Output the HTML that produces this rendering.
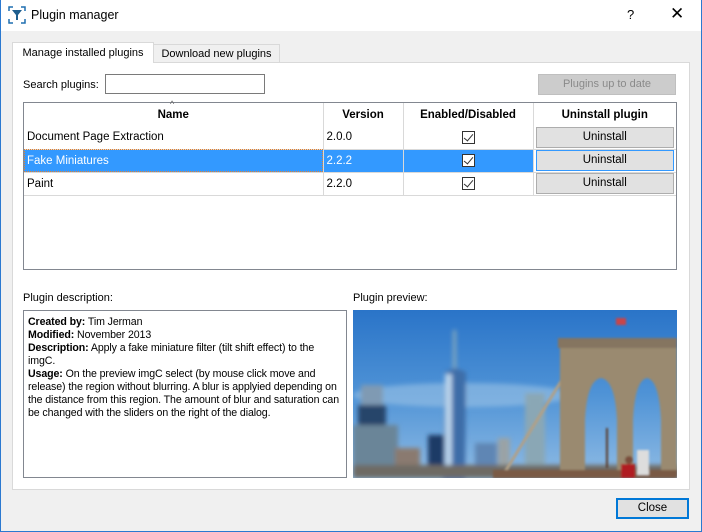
<!DOCTYPE html>
<html><head><meta charset="utf-8"><style>
*{box-sizing:border-box;margin:0;padding:0}
body{width:702px;height:532px;background:#f0f0f0;font-family:"Liberation Sans",sans-serif;font-size:11.5px;color:#000;position:relative;overflow:hidden}
.abs{position:absolute}
.win{position:absolute;left:0;top:0;width:702px;height:532px;border:1px solid #2b79d0;border-top:none}
.title{position:absolute;left:0;top:0;width:702px;height:31px;background:#fff}
.pane{left:12px;top:62px;width:678px;height:428px;background:#fff;border:1px solid #d9d9d9}
.tab{height:20px;border:1px solid #d9d9d9;border-bottom:none;font-size:11px;padding-top:4px;text-align:center;white-space:nowrap}
table{border-collapse:collapse;position:absolute;left:24px;top:103px;table-layout:fixed}
td{height:23px;padding:0 3px;border-right:1px solid #d9d9d9;border-bottom:1px solid #d9d9d9;font-size:11.5px;white-space:nowrap}
th{height:23px;font-weight:bold;border-right:1px solid #d9d9d9;font-size:11.5px}
.cb{display:inline-block;width:13px;height:13px;border:1px solid #333;background:#fff;position:relative;vertical-align:middle}
.cb:after{content:"";position:absolute;left:3px;top:0px;width:4px;height:8px;border-right:1.3px solid #333;border-bottom:1.3px solid #333;transform:rotate(40deg)}
.btn{background:#e1e1e1;border:1px solid #adadad;text-align:center;height:21px;line-height:19px;font-size:11.5px;color:#000}
.sel td{background:#3399ff;color:#fff}
</style></head><body>
<div class="title"></div>
<div class="win"></div>
<svg class="abs" style="left:8px;top:6px" width="18" height="18" viewBox="0 0 18 18"><path d="M1 5V1h4M13 1h4v4M1 13v4h4M13 17h4v-4" stroke="#1e6fb0" stroke-width="1.5" fill="none"/><path d="M4 4h10l-4 5v5h-2v-5z" fill="#1f5f8f"/></svg>
<div class="abs" style="left:31px;top:8px;font-size:12.5px">Plugin manager</div>
<div class="abs" style="left:627px;top:7px;font-size:13px">?</div>
<div class="abs" style="left:670px;top:4px;font-size:17px">✕</div>
<div class="abs pane"></div>
<div class="abs tab" style="left:12px;top:42px;width:142px;height:21px;background:#fff">Manage installed plugins</div>
<div class="abs tab" style="left:153px;top:44px;width:127px;height:18px;background:#f0f0f0;padding-top:3px">Download new plugins</div>
<div class="abs" style="left:23px;top:79px;font-size:11px">Search plugins:</div>
<div class="abs" style="left:105px;top:74px;width:160px;height:20px;border:1px solid #7a7a7a;background:#fff"></div>
<div class="abs" style="left:538px;top:74px;width:138px;height:21px;background:#cccccc;border:1px solid #bfbfbf;color:#8a8a8a;text-align:center;line-height:19px;font-size:11px">Plugins up to date</div>
<div class="abs" style="left:23px;top:102px;width:654px;height:168px;border:1px solid #828790;background:#fff"></div>
<div class="abs" style="left:170px;top:99px;font-size:9px;color:#666">^</div>
<table>
<colgroup><col style="width:299px"><col style="width:80px"><col style="width:130px"><col style="width:143px"></colgroup>
<tr><th>Name</th><th>Version</th><th>Enabled/Disabled</th><th style="border-right:none">Uninstall plugin</th></tr>
<tr><td>Document Page Extraction</td><td>2.0.0</td><td style="text-align:center"><span class="cb"></span></td><td style="padding:0 2px;border-right:none"><div class="btn">Uninstall</div></td></tr>
<tr class="sel"><td style="outline:1px dotted #e08030;outline-offset:-1px">Fake Miniatures</td><td>2.2.2</td><td style="text-align:center"><span class="cb"></span></td><td style="padding:0 2px;border-right:none;background:#fff"><div class="btn" style="border-color:#3399ff">Uninstall</div></td></tr>
<tr><td>Paint</td><td>2.2.0</td><td style="text-align:center"><span class="cb"></span></td><td style="padding:0 2px;border-right:none"><div class="btn">Uninstall</div></td></tr>
</table>
<div class="abs" style="left:23px;top:292px;font-size:11px">Plugin description:</div>
<div class="abs" style="left:353px;top:292px;font-size:11px">Plugin preview:</div>
<div class="abs" style="left:23px;top:310px;width:324px;height:168px;border:1px solid #828790;background:#fff;padding:5px 4px;line-height:13px;font-size:10.6px;letter-spacing:-0.1px">
<b>Created by:</b> Tim Jerman<br><b>Modified:</b> November 2013<br><b>Description:</b> Apply a fake miniature filter (tilt shift effect) to the imgC.<br><b>Usage:</b> On the preview imgC select (by mouse click move and release) the region without blurring. A blur is applyied depending on the distance from this region. The amount of blur and saturation can be changed with the sliders on the right of the dialog.</div>
<svg class="abs" style="left:353px;top:310px" width="324" height="168" viewBox="0 0 324 168">
<defs><linearGradient id="sk" x1="0" y1="0" x2="0" y2="1"><stop offset="0" stop-color="#2a74c8"/><stop offset=".5" stop-color="#4f93d6"/><stop offset="1" stop-color="#8fbbe4"/></linearGradient>
<filter id="b"><feGaussianBlur stdDeviation="2.5"/></filter><filter id="b2"><feGaussianBlur stdDeviation="1"/></filter></defs>
<rect width="324" height="168" fill="url(#sk)"/>
<g filter="url(#b)">
<ellipse cx="110" cy="85" rx="110" ry="12" fill="#a9cbe9" opacity=".5"/>
<rect x="8" y="75" width="22" height="93" fill="#7f9ab3"/>
<rect x="5" y="95" width="28" height="73" fill="#27456a"/>
<rect x="0" y="115" width="45" height="53" fill="#6b8598"/>
<rect x="42" y="138" width="25" height="30" fill="#8a7a70"/>
<rect x="75" y="125" width="18" height="43" fill="#1e3b66"/>
<rect x="100" y="20" width="3" height="40" fill="#8ab"/>
<polygon points="90,170 92,62 102,58 113,62 112,170" fill="#3c6da8"/>
<rect x="92" y="64" width="7" height="104" fill="#b8d2ea"/>
<rect x="122" y="133" width="22" height="35" fill="#5e86b4"/>
<rect x="145" y="128" width="12" height="40" fill="#9aa3a6"/>
<rect x="172" y="83" width="20" height="85" fill="#8aa7b5"/>
<rect x="0" y="155" width="324" height="13" fill="#6e6a64"/>
</g>
<g filter="url(#b2)">
<line x1="150" y1="165" x2="212" y2="65" stroke="#b0a088" stroke-width="3"/>
<path d="M207 168V32h117v136h-16V110q-2-40-14-42-12 2-14 42v58h-16V110q-2-40-16-42-14 2-16 42v58z" fill="#9a8a70"/>
<rect x="205" y="28" width="119" height="10" fill="#857560"/>
<rect x="140" y="160" width="184" height="8" fill="#7a5a44"/>
<rect x="253" y="118" width="2" height="40" fill="#5a3a2a"/>
<path d="M268 168v-14h14v14z" fill="#b01a22"/>
<circle cx="276" cy="150" r="4" fill="#7a4e3a"/>
<rect x="284" y="140" width="12" height="25" fill="#ddd"/>
<rect x="263" y="8" width="10" height="7" fill="#c8444a"/>
</g>
</svg>
<div class="abs" style="left:616px;top:498px;width:73px;height:21px;background:#e1e1e1;border:2px solid #0078d7;text-align:center;line-height:17px">Close</div>
</body></html>
